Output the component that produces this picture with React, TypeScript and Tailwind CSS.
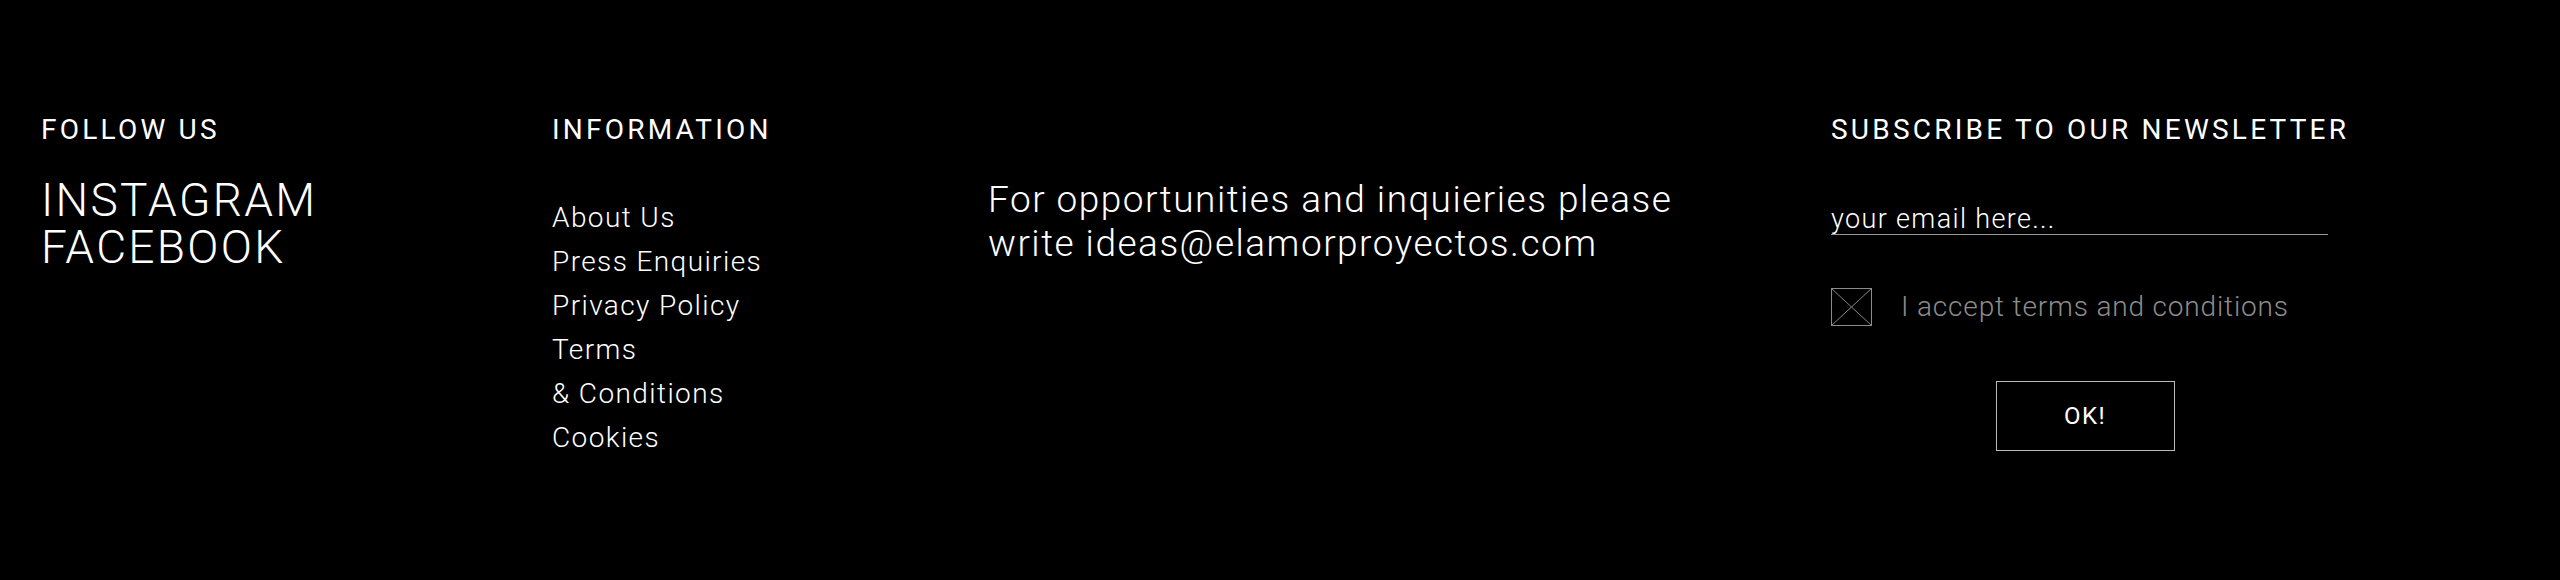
import React from 'react';

const Heading = ({ children }: { children: React.ReactNode }) => (
  <h3 className="text-[28px] leading-[34px] tracking-[0.115em] font-normal uppercase whitespace-nowrap">{children}</h3>
);

const links = ['About Us', 'Press Enquiries', 'Privacy Policy', 'Terms', '& Conditions', 'Cookies'];

const App = () => {
  return (
    <footer className="w-full h-[580px] bg-black text-white font-['Roboto','Liberation_Sans',sans-serif] font-light">
      <div className="flex pl-[41px] pt-[113px]">
        {/* Follow us */}
        <div className="w-[511px] shrink-0">
          <Heading>Follow us</Heading>
          <div className="mt-[30px] flex flex-col text-[46px] leading-[47px] tracking-[0.05em]">
            <a href="#">INSTAGRAM</a>
            <a href="#">FACEBOOK</a>
          </div>
        </div>

        {/* Information */}
        <div className="w-[436px] shrink-0">
          <Heading>Information</Heading>
          <ul className="mt-[49px] text-[28px] leading-[44px] tracking-[0.05em]">
            {links.map((l) => (
              <li key={l}>
                <a href="#">{l}</a>
              </li>
            ))}
          </ul>
        </div>

        {/* Contact */}
        <div className="w-[843px] shrink-0 pt-[65px]">
          <p className="text-[37px] leading-[44px] tracking-[0.04em]">
            For opportunities and inquieries please
            <br />
            write ideas@elamorproyectos.com
          </p>
        </div>

        {/* Newsletter */}
        <div className="w-[508px] shrink-0 flex flex-col">
          <Heading>Subscribe to our newsletter</Heading>
          <div className="mt-[57px] w-[497px] border-b border-[#999] text-[27px] leading-[30px] tracking-[0.05em]">
            your email here...
          </div>
          <label className="mt-[51px] flex items-center gap-[29px] text-[28px] tracking-[0.03em] text-[#8c8c8c] whitespace-nowrap">
            <span className="relative w-[41px] h-[38px] border border-[#8c8c8c] shrink-0">
              <svg className="absolute inset-0 w-full h-full" viewBox="0 0 41 38" preserveAspectRatio="none">
                <line x1="0" y1="0" x2="41" y2="38" stroke="#8c8c8c" strokeWidth="1" />
                <line x1="41" y1="0" x2="0" y2="38" stroke="#8c8c8c" strokeWidth="1" />
              </svg>
            </span>
            I accept terms and conditions
          </label>
          <button className="mt-[53px] self-center w-[179px] h-[70px] border border-[#bbb] text-[24px] font-normal tracking-[0.06em] text-white">
            OK!
          </button>
        </div>
      </div>
    </footer>
  );
};

export default App;
